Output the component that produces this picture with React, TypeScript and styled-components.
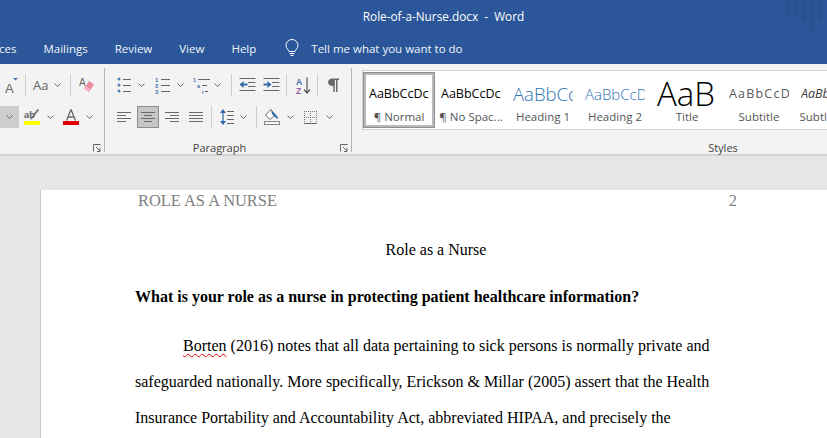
import React from 'react';
import styled, { createGlobalStyle } from 'styled-components';

const UI_FONT = '"Open Sans", "Noto Sans", sans-serif';
const DOC_FONT = '"Liberation Serif", "Times New Roman", serif';

const styleCards = [
  { id: 'normal', preview: 'AaBbCcDc', label: '¶ Normal', kind: 'body', active: true },
  { id: 'nospace', preview: 'AaBbCcDc', label: '¶ No Spac...', kind: 'body' },
  { id: 'h1', preview: 'AaBbCc', label: 'Heading 1', kind: 'h1' },
  { id: 'h2', preview: 'AaBbCcD', label: 'Heading 2', kind: 'h2' },
  { id: 'title', preview: 'AaB', label: 'Title', kind: 'title' },
  { id: 'subtitle', preview: 'AaBbCcD', label: 'Subtitle', kind: 'subtitle' },
  { id: 'subtle', preview: 'AaBbCcD', label: 'Subtle Em...', kind: 'subtle' },
];

const Chevron: React.FC = () => (
  <svg width="7" height="4" viewBox="0 0 7 4" fill="none" stroke="#666" strokeWidth="1">
    <path d="M0.5 0.5 L3.5 3.5 L6.5 0.5" />
  </svg>
);

const Bullets: React.FC = () => (
  <svg width="14" height="16" viewBox="0 0 14 16">
    <g fill="#4a7eb5">
      <circle cx="2" cy="2" r="1.5" />
      <circle cx="2" cy="8" r="1.5" />
      <circle cx="2" cy="14" r="1.5" />
    </g>
    <path d="M6 2.500h8M6 8.500h8M6 14.500h8" stroke="#666" />
  </svg>
);

const Numbers: React.FC = () => (
  <svg width="16" height="17" viewBox="0 0 16 17">
    <g fill="#3f72a8" fontSize="6" fontFamily="Liberation Sans, sans-serif" fontWeight="700">
      <text x="0" y="5">1</text>
      <text x="0" y="11">2</text>
      <text x="0" y="17">3</text>
    </g>
    <path d="M6 2.500h9M6 8.500h9M6 14.500h9" stroke="#666" />
  </svg>
);

const Multilevel: React.FC = () => (
  <svg width="17" height="17" viewBox="0 0 17 17">
    <g fill="#3f72a8" fontSize="5.5" fontFamily="Liberation Sans, sans-serif" fontWeight="700">
      <text x="0" y="5">1</text>
      <text x="4" y="11">a</text>
      <text x="9" y="17">i</text>
    </g>
    <path d="M5 2.500h12M9 8.500h5M12 14.500h3" stroke="#666" />
  </svg>
);

const Indent: React.FC<{ flip?: boolean }> = ({ flip }) => (
  <svg width="17" height="14" viewBox="0 0 17 14">
    <path d="M0.5 0.5h16M9 4.500h7.500M9 8.500h7.500M0.500 12.500h16" stroke="#666" />
    <path
      d={flip ? 'M0.500 5.500h4V3l4 3.500-4 3.500V7.500h-4z' : 'M8.500 5.500h-4V3l-4 3.500 4 3.500V7.500h4z'}
      fill="#2f6aa6"
    />
  </svg>
);

const SortAz: React.FC = () => (
  <svg width="15" height="17" viewBox="0 0 15 17">
    <text x="0" y="8" fontSize="8.5" fontWeight="700" fontFamily="Liberation Sans, sans-serif" fill="#3f72a8">A</text>
    <text x="0" y="17" fontSize="8.5" fontWeight="700" fontFamily="Liberation Sans, sans-serif" fill="#9a5fa8">Z</text>
    <path d="M11 0.5v15M8 12.500l3 3.500 3-3.500" fill="none" stroke="#555" strokeWidth="1.2" />
  </svg>
);

const Pilcrow: React.FC = () => (
  <svg width="11" height="14" viewBox="0 0 11 14">
    <path d="M4.500 0.500H11V2H9.500V14H8V2H6.800V14H5.300V8C1.800 8 0 6.500 0 4.200S2 0.500 4.500 0.500z" fill="#6a6a6a" />
  </svg>
);

const AlignLines: React.FC<{ mode: 'left' | 'center' | 'right' | 'justify' }> = ({ mode }) => {
  const paths = {
    left: 'M0 .5h14M0 3.500h9M0 6.500h14M0 9.500h9',
    center: 'M0 .5h14M3 3.500h8M0 6.500h14M3 9.500h8',
    right: 'M0 .5h14M5 3.500h9M0 6.500h14M5 9.500h9',
    justify: 'M0 .5h14M0 3.500h14M0 6.500h14M0 9.500h14',
  };
  return (
    <svg width="14" height="10" viewBox="0 0 14 10">
      <path d={paths[mode]} stroke="#6a6a6a" />
    </svg>
  );
};

const LineSpacing: React.FC = () => (
  <svg width="14" height="16" viewBox="0 0 14 16">
    <path d="M3 3v10" stroke="#2f6aa6" strokeWidth="1.2" />
    <path d="M3 0L6 4H0zM3 16L6 12H0z" fill="#2f6aa6" />
    <path d="M7 2.500h7M7 6.500h7M7 10.500h7M7 14.500h7" stroke="#666" />
  </svg>
);

const Shading: React.FC = () => (
  <svg width="16" height="16" viewBox="0 0 16 16">
    <path d="M7 0.500L1.500 6l4.500 4.500L11 6z" fill="#fff" stroke="#666" />
    <path d="M7 1l5 5c1 1 2 2 2 3.500-1.500 0-2-.5-3-1.500L8 5z" fill="#2f6aa6" />
    <rect x="0.500" y="12.500" width="15" height="3" fill="#f7f7f7" stroke="#888" />
  </svg>
);

const Borders: React.FC = () => (
  <svg width="13" height="13" viewBox="0 0 13 13">
    <path d="M.5 0v12M6.500 0v12M12.500 0v12M0 .5h13M0 6.500h13" stroke="#777" strokeDasharray="1 1" fill="none" />
    <path d="M0 12.500h13" stroke="#666" />
  </svg>
);

const ShrinkA: React.FC = () => (
  <svg width="13" height="16" viewBox="0 0 13 16">
    <text x="0" y="16" fontSize="13" fontFamily="Liberation Sans, sans-serif" fill="#666">A</text>
    <path d="M8 1h5l-2.500 2.500z" fill="#3f72a8" />
  </svg>
);

const Eraser: React.FC = () => (
  <svg width="16" height="16" viewBox="0 0 16 16">
    <text x="0" y="9" fontSize="10" fontFamily="Liberation Sans, sans-serif" fill="#666">A</text>
    <path d="M10 4l5 3.500-5 7.500-5-3.500z" fill="#ec8a9b" />
    <path d="M5 11.500l5 3.500 1.700-2.600-5-3.500z" fill="#f3b6c2" />
  </svg>
);

const Highlight: React.FC = () => (
  <svg width="16" height="16" viewBox="0 0 16 16">
    <text x="0" y="9" fontSize="9.500" fontWeight="700" fontFamily="Liberation Sans, sans-serif" fill="#666">ab</text>
    <path d="M15 1L8 10l-1.500 1 .3-2L13.500 0z" fill="#6f6f6f" />
    <rect x="0" y="12" width="16" height="4" fill="#ffff00" />
  </svg>
);

const FontColor: React.FC = () => (
  <svg width="16" height="16" viewBox="0 0 16 16">
    <path d="M8 0.500L3.500 11.500M8 0.500l4.500 11M5 8h6" stroke="#666" strokeWidth="1.3" fill="none" />
    <rect x="0" y="12" width="16" height="4" fill="#e00000" />
  </svg>
);

const Launcher: React.FC = () => (
  <svg width="8" height="8" viewBox="0 0 8 8" fill="none" stroke="#666">
    <path d="M.5 7.500V.5h7M3 3l4 4M7 4v3.500H4" />
  </svg>
);

const Stripes: React.FC = () => (
  <svg width="41" height="32" viewBox="0 0 41 32">
    <g fill="#264e8b">
      <rect x="0" width="4" height="16" />
      <rect x="8" width="4" height="16" />
      <rect x="15" width="5" height="22" />
      <rect x="23" width="5" height="32" />
      <rect x="31" width="5" height="20" />
    </g>
  </svg>
);

const App: React.FC = () => {
  return (
    <Window>
      <GlobalStyle />
      <TitleBar>
        Role-of-a-Nurse.docx&nbsp; -&nbsp; Word
        <TitleStripes>
          <Stripes />
        </TitleStripes>
      </TitleBar>
      <TabBar>
        <Tab $ml={-1}>ces</Tab>
        <Tab $ml={27}>Mailings</Tab>
        <Tab $ml={27}>Review</Tab>
        <Tab $ml={27}>View</Tab>
        <Tab $ml={27}>Help</Tab>
        <BulbIcon width="14" height="18" viewBox="0 0 14 18" fill="none" stroke="#fff">
          <path d="M4 12.500C3.500 10.500 1 9.500 1 6.500a6 6 0 0 1 12 0c0 3-2.500 4-3 6z" />
          <path d="M4.500 14.500h5M5.500 16.500h3" />
        </BulbIcon>
        <Tab $ml={12}>Tell me what you want to do</Tab>
      </TabBar>
      <Ribbon>
        <Group $w={105}>
          <ToolRow>
            <Tool $w={13} $ml={5}><ShrinkA /></Tool>
            <RowSep $ml={7} />
            <AaGlyph>Aa</AaGlyph>
            <Tool $w={7} $ml={6}><Chevron /></Tool>
            <RowSep $ml={9} />
            <Tool $w={16} $ml={8}><Eraser /></Tool>
          </ToolRow>
          <ToolRow>
            <ActiveTool $w={19}><Chevron /></ActiveTool>
            <Tool $w={16} $ml={5}><Highlight /></Tool>
            <Tool $w={7} $ml={7}><Chevron /></Tool>
            <Tool $w={16} $ml={9}><FontColor /></Tool>
            <Tool $w={7} $ml={7}><Chevron /></Tool>
          </ToolRow>
          <LauncherSlot><Launcher /></LauncherSlot>
        </Group>
        <Group $w={247}>
          <ToolRow>
            <Tool $w={14} $ml={12}><Bullets /></Tool>
            <Tool $w={7} $ml={7}><Chevron /></Tool>
            <Tool $w={16} $ml={10}><Numbers /></Tool>
            <Tool $w={7} $ml={6}><Chevron /></Tool>
            <Tool $w={17} $ml={9}><Multilevel /></Tool>
            <Tool $w={7} $ml={4}><Chevron /></Tool>
            <RowSep $ml={10} />
            <Tool $w={17} $ml={7}><Indent /></Tool>
            <Tool $w={17} $ml={7}><Indent flip /></Tool>
            <RowSep $ml={6} />
            <Tool $w={15} $ml={9}><SortAz /></Tool>
            <RowSep $ml={6} />
            <Tool $w={11} $ml={10}><Pilcrow /></Tool>
          </ToolRow>
          <ToolRow>
            <Tool $w={14} $ml={12}><AlignLines mode="left" /></Tool>
            <ActiveTool $w={22} $ml={6} $framed><AlignLines mode="center" /></ActiveTool>
            <Tool $w={14} $ml={6}><AlignLines mode="right" /></Tool>
            <Tool $w={14} $ml={10}><AlignLines mode="justify" /></Tool>
            <RowSep $ml={8} />
            <Tool $w={14} $ml={8}><LineSpacing /></Tool>
            <Tool $w={7} $ml={6}><Chevron /></Tool>
            <RowSep $ml={9} />
            <Tool $w={16} $ml={7}><Shading /></Tool>
            <Tool $w={7} $ml={7}><Chevron /></Tool>
            <Tool $w={13} $ml={10}><Borders /></Tool>
            <Tool $w={7} $ml={9}><Chevron /></Tool>
          </ToolRow>
          <GroupLabel $shift={17} $top={7}>Paragraph</GroupLabel>
          <LauncherSlot><Launcher /></LauncherSlot>
        </Group>
        <StylesGroup>
          <Gallery>
            {styleCards.map(card => (
              <StyleCard key={card.id} $active={card.active}>
                <StylePreview $kind={card.kind}>{card.preview}</StylePreview>
                <StyleName>{card.label}</StyleName>
              </StyleCard>
            ))}
          </Gallery>
          <GroupLabel $shift={0} $top={10}>Styles</GroupLabel>
        </StylesGroup>
      </Ribbon>
      <DocArea>
        <Page>
          <PageHeader>
            <span>ROLE AS A NURSE</span>
            <span>2</span>
          </PageHeader>
          <DocTitle>Role as a Nurse</DocTitle>
          <Question>What is your role as a nurse in protecting patient healthcare information?</Question>
          <Paragraph>
            <FirstLine>
              <SpellError>Borten</SpellError> (2016) notes that all data pertaining to sick persons is normally private and
            </FirstLine>
            <BodyLine>safeguarded nationally. More specifically, Erickson &amp; Millar (2005) assert that the Health</BodyLine>
            <BodyLine>Insurance Portability and Accountability Act, abbreviated HIPAA, and precisely the</BodyLine>
          </Paragraph>
        </Page>
      </DocArea>
    </Window>
  );
};

export default App;

const GlobalStyle = createGlobalStyle`
  html, body {
    margin: 0;
    padding: 0;
    background: #e6e6e6;
  }
`;

const Window = styled.div`
  width: 827px;
  height: 438px;
  display: flex;
  flex-direction: column;
  overflow: hidden;
  font-family: ${UI_FONT};
`;

const TitleBar = styled.header`
  height: 32px;
  flex: none;
  position: relative;
  display: flex;
  justify-content: center;
  align-items: center;
  padding-left: 60px;
  box-sizing: border-box;
  background: #2b579a;
  color: #fff;
  font-size: 11.8px;
`;

const TitleStripes = styled.div`
  position: absolute;
  top: 0;
  left: 786px;
  height: 32px;
  opacity: 0.6;
`;

const TabBar = styled.nav`
  height: 32px;
  flex: none;
  display: flex;
  align-items: center;
  background: #2b579a;
  color: #f1f4f9;
  font-size: 11.5px;
  white-space: nowrap;
`;

const Tab = styled.span<{ $ml: number }>`
  margin-left: ${p => p.$ml}px;
`;

const BulbIcon = styled.svg`
  margin-left: 29px;
  flex: none;
`;

const Ribbon = styled.section`
  height: 92px;
  flex: none;
  display: flex;
  box-sizing: border-box;
  background: #f3f3f3;
  border-bottom: 2px solid #d4d4d4;
`;

const Group = styled.div<{ $w: number }>`
  width: ${p => p.$w}px;
  height: 84px;
  flex: none;
  position: relative;
  box-sizing: border-box;
  margin-top: 4px;
  padding-top: 1px;
  border-right: 1px solid #b4b4b4;
  display: flex;
  flex-direction: column;
`;

const ToolRow = styled.div`
  height: 32px;
  flex: none;
  display: flex;
  align-items: center;
`;

const Tool = styled.div<{ $w: number; $ml?: number }>`
  width: ${p => p.$w}px;
  margin-left: ${p => p.$ml ?? 0}px;
  flex: none;
  display: flex;
  justify-content: center;
  align-items: center;
`;

const ActiveTool = styled(Tool)<{ $framed?: boolean }>`
  height: 22px;
  box-sizing: border-box;
  background: ${p => (p.$framed ? '#c6c6c6' : '#cdcdcd')};
  border: ${p => (p.$framed ? '1px solid #8e8e8e' : 'none')};
`;

const RowSep = styled.div<{ $ml: number }>`
  width: 1px;
  height: 22px;
  flex: none;
  margin-left: ${p => p.$ml}px;
  background: #cfcfcf;
`;

const AaGlyph = styled.span`
  width: 15px;
  margin-left: 7px;
  flex: none;
  font-size: 13px;
  color: #666;
`;

const GroupLabel = styled.div<{ $shift: number; $top: number }>`
  height: 16px;
  margin-top: ${p => p.$top}px;
  padding-right: ${p => p.$shift}px;
  font-size: 11px;
  line-height: 16px;
  text-align: center;
  color: #444;
`;

const LauncherSlot = styled.div`
  position: absolute;
  right: 3px;
  bottom: 0;
  height: 8px;
  display: flex;
`;

const StylesGroup = styled.div`
  width: 742px;
  height: 84px;
  flex: none;
  margin-top: 4px;
  display: flex;
  flex-direction: column;
`;

const Gallery = styled.div`
  height: 60px;
  flex: none;
  margin: 2px 0 0 10px;
  box-sizing: border-box;
  display: flex;
  padding-top: 1px;
  background: #fff;
  border: 1px solid #d2d2d2;
  border-right: none;
`;

const StyleCard = styled.div<{ $active?: boolean }>`
  width: 72px;
  height: 56px;
  flex: none;
  box-sizing: border-box;
  overflow: hidden;
  display: flex;
  flex-direction: column;
  align-items: center;
  border: 3px solid ${p => (p.$active ? '#b9b9b9' : 'transparent')};
  outline: ${p => (p.$active ? '1px solid #8f8f8f' : 'none')};
  outline-offset: -1px;
`;

const previewFonts: Record<string, string> = {
  body: 'font-size: 12.5px; color: #000;',
  h1: 'font-size: 18.5px; font-weight: 300; color: #2e74b5;',
  h2: 'font-size: 15px; font-weight: 300; color: #2e74b5;',
  title: 'font-size: 33px; font-weight: 300; color: #000;',
  subtitle: 'font-size: 12.5px; color: #595959; letter-spacing: 1.2px;',
  subtle: 'font-size: 12.5px; font-style: italic; color: #404040;',
};

const StylePreview = styled.div<{ $kind: string }>`
  width: 60px;
  height: 31px;
  flex: none;
  margin-top: 3px;
  line-height: 32px;
  overflow: hidden;
  white-space: nowrap;
  text-align: left;
  font-family: "Open Sans", sans-serif;
  ${p => previewFonts[p.$kind]}
`;

const StyleName = styled.div`
  font-size: 11.5px;
  line-height: 16px;
  white-space: nowrap;
  color: #555;
`;

const DocArea = styled.main`
  flex: 1;
  min-height: 0;
  padding: 34px 0 0 40px;
  background: #e6e6e6;
`;

const Page = styled.article`
  height: 300px;
  box-sizing: border-box;
  padding-left: 94px;
  background: #fff;
  border-left: 1px solid #c8c8c8;
  font-family: ${DOC_FONT};
  font-size: 16px;
  color: #000;
`;

const PageHeader = styled.div`
  width: 602px;
  box-sizing: border-box;
  padding: 1px 0 0 3px;
  display: flex;
  justify-content: space-between;
  font-size: 16.4px;
  line-height: 20px;
  color: #808080;
`;

const DocTitle = styled.h1`
  width: 602px;
  margin: 29px 0 0;
  font-size: 16px;
  font-weight: 400;
  line-height: 20px;
  text-align: center;
`;

const Question = styled.p`
  margin: 27px 0 0;
  font-weight: 700;
  line-height: 20px;
`;

const Paragraph = styled.div`
  margin-top: 21px;
`;

const BodyLine = styled.div`
  height: 36px;
  line-height: 36px;
  white-space: nowrap;
`;

const FirstLine = styled(BodyLine)`
  padding-left: 48px;
`;

const SpellError = styled.span`
  text-decoration: underline wavy #e00000 1px;
  text-underline-offset: 2px;
`;
